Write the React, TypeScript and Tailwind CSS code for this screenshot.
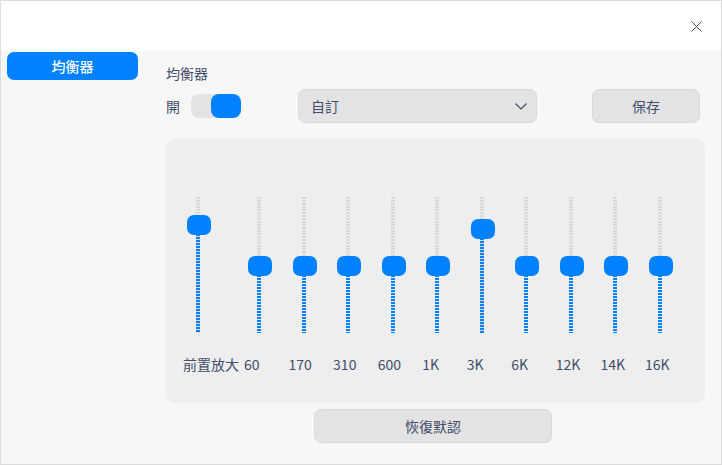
import { type FC } from "react";

const FONT = '"Noto Sans CJK TC", "Noto Sans", sans-serif';

interface Band {
  label: string;
  knobTop: number;
}

const PREAMP: Band = { label: "前置放大", knobTop: 18 };

const BANDS: Array<Band> = [
  { label: "60", knobTop: 59 },
  { label: "170", knobTop: 59 },
  { label: "310", knobTop: 59 },
  { label: "600", knobTop: 59 },
  { label: "1K", knobTop: 59 },
  { label: "3K", knobTop: 22 },
  { label: "6K", knobTop: 59 },
  { label: "12K", knobTop: 59 },
  { label: "14K", knobTop: 59 },
  { label: "16K", knobTop: 59 },
];

const Slider: FC<{ band: Band; width: string }> = ({ band, width }) => (
  <div className={`flex flex-col ${width}`}>
    <div className="relative h-[136px]">
      <div className="absolute left-[13px] top-0 h-full w-[4px] bg-[repeating-linear-gradient(to_bottom,#d9d9d9_0px,#d9d9d9_2px,transparent_2px,transparent_3px)]" />
      <div
        className="absolute left-[13px] bottom-0 w-[4px] bg-[repeating-linear-gradient(to_bottom,#0081ff_0px,#0081ff_2px,transparent_2px,transparent_3px)]"
        style={{ top: band.knobTop + 10 }}
      />
      <div
        className="absolute left-[4px] h-[20px] w-[24px] rounded-[7px] bg-[#0081ff]"
        style={{ top: band.knobTop }}
      />
    </div>
    <div className="mt-[21px] h-[20px] whitespace-nowrap text-[14px] leading-[20px] text-[#414d68]">
      {band.label}
    </div>
  </div>
);

export default function App() {
  return (
    <div
      className="flex h-[465px] w-[722px] flex-col border border-[#dcdcdc] bg-[#f7f7f7]"
      style={{ fontFamily: FONT }}
    >
      <div className="flex h-[50px] shrink-0 items-start justify-end bg-white pr-[19px] pt-[20px]">
        <svg width="11" height="11" viewBox="0 0 11 11" className="text-[#414d68]">
          <path d="M0.5 0.5L10.5 10.5M10.5 0.5L0.5 10.5" stroke="currentColor" strokeWidth="1" />
        </svg>
      </div>

      <div className="flex flex-1">
        <div className="w-[165px] shrink-0 pl-[6px] pt-[1px]">
          <div className="flex h-[28px] w-[131px] items-center justify-center rounded-[7px] bg-[#0081ff] text-[14px] font-medium text-white">
            均衡器
          </div>
        </div>

        <div className="flex w-[539px] flex-col pt-[12px]">
          <div className="h-[20px] text-[14px] leading-[20px] text-[#414d68]">均衡器</div>

          <div className="mt-[6px] flex h-[34px] items-center">
            <span className="w-[25px] text-[14px] text-[#414d68]">開</span>
            <div className="flex h-[24px] w-[50px] justify-end rounded-[8px] bg-[#e3e3e3]">
              <div className="h-[24px] w-[30px] rounded-[8px] bg-[#0081ff]" />
            </div>
            <div className="ml-[57px] flex h-[34px] w-[239px] items-center justify-between rounded-[7px] border border-[#d9d9d9] bg-[#e3e3e3] pl-[12px] pr-[9px] text-[14px] text-[#414d68]">
              <span>自訂</span>
              <svg width="12" height="7" viewBox="0 0 12 7">
                <path d="M0.5 0.5L6 6L11.5 0.5" fill="none" stroke="#414d68" strokeWidth="1.2" />
              </svg>
            </div>
            <div className="ml-[55px] flex h-[34px] w-[108px] items-center justify-center rounded-[7px] border border-[#d9d9d9] bg-[#e3e3e3] text-[14px] text-[#414d68]">
              保存
            </div>
          </div>

          <div className="mt-[16px] flex h-[264px] rounded-[9px] bg-[#eeeeee] pl-[17px] pt-[58px]">
            <Slider band={PREAMP} width="w-[61px]" />
            {BANDS.map((band) => (
              <Slider key={band.label} band={band} width="w-[44.56px]" />
            ))}
          </div>

          <div className="mt-[6px] flex justify-center pr-[5px]">
            <div className="flex h-[34px] w-[238px] items-center justify-center rounded-[7px] border border-[#d9d9d9] bg-[#e3e3e3] text-[14px] text-[#414d68]">
              恢復默認
            </div>
          </div>
        </div>
      </div>
    </div>
  );
}
